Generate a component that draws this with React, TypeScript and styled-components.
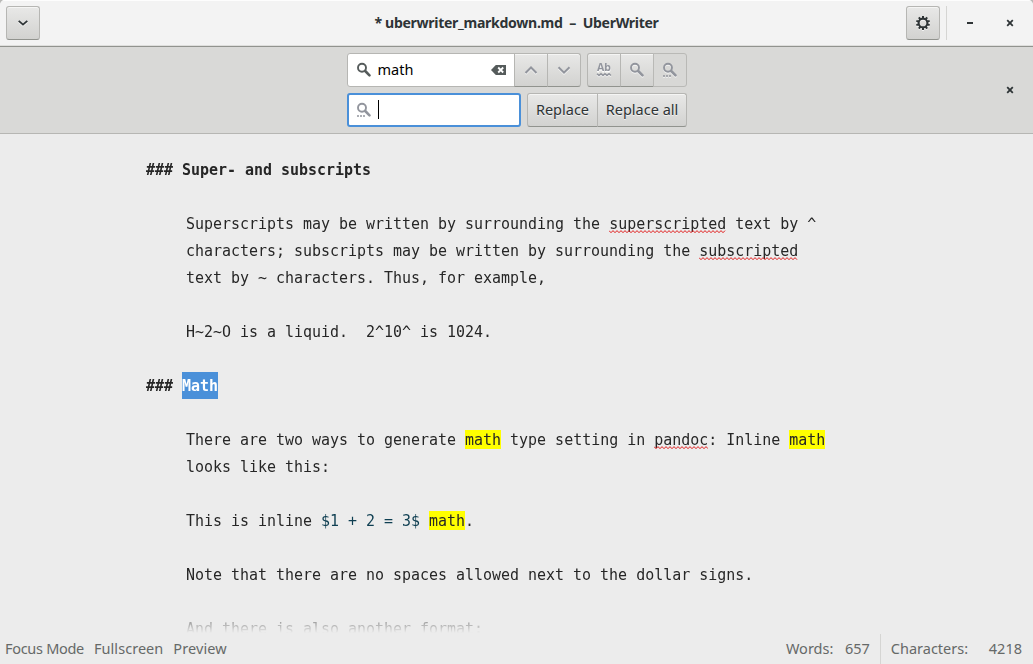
import React from 'react';
import styled, { createGlobalStyle, css } from 'styled-components';

const Global = createGlobalStyle`
  *, *::before, *::after { box-sizing: border-box; }
  body { margin: 0; background: #ececec; overflow: hidden; }
`;

const Window = styled.div`
  display: flex;
  flex-direction: column;
  width: 1033px;
  height: 664px;
  overflow: hidden;
  background: #ececec;
  color: #2e3436;
  font-family: 'Noto Sans', 'Open Sans', sans-serif;
  font-size: 14.5px;
  border-radius: 5px 5px 0 0;
`;

const Backdrop = styled.div`
  background: #b9b9b7;
`;

const HeaderBar = styled.header`
  display: grid;
  grid-template-columns: 1fr auto 1fr;
  height: 47px;
  flex: none;
  padding: 6px 6px 0;
  background: #f3f3f3;
  border-bottom: 1px solid #91938e;
  box-shadow: inset 0 1px #fdfdfd, inset 0 -1px #dededc;
`;

const Title = styled.h1`
  margin: 0;
  font-size: 14.1px;
  line-height: 34px;
  font-weight: 700;
  letter-spacing: -0.32px;
  white-space: pre;
`;

const WindowControls = styled.div`
  display: flex;
  justify-content: flex-end;
`;

const ControlGap = styled.span`
  width: 6px;
`;

const Divider = styled.div<{ $height: number }>`
  width: 1px;
  height: ${(p) => p.$height}px;
  background: #d5d5d3;
`;

const raised = css`
  background: linear-gradient(#e8e8e7, #d2d2d0);
  border: 1px solid #b6b6b3;
  border-bottom-color: #91938e;
  box-shadow: inset 0 1px #f5f5f4;
`;

const Button = styled.button<{ $pressed?: boolean; $width?: number }>`
  display: flex;
  align-items: center;
  justify-content: center;
  width: ${(p) => p.$width ?? 34}px;
  height: 34px;
  flex: none;
  padding: 0;
  border-radius: 3px;
  font: inherit;
  color: #2e3436;
  text-shadow: 0 1px rgba(255, 255, 255, 0.7);
  white-space: nowrap;
  ${raised}
  & svg { overflow: visible; filter: drop-shadow(0 1px 0 rgba(255, 255, 255, 0.7)); }
  ${(p) =>
    p.$pressed &&
    css`
      background: #d8d8d6;
      border-color: #b9b9b6;
      box-shadow: none;
    `}
`;

const ButtonLabel = styled.span`
  line-height: 20px;
  padding: 0 0 2px 1px;
`;

const FlatButton = styled.button`
  display: flex;
  align-items: center;
  justify-content: center;
  width: 34px;
  height: 34px;
  padding: 0;
  border: 0;
  background: none;
  color: #2e3436;
`;

const SearchBar = styled.section`
  display: grid;
  grid-template-columns: 1fr 340px 1fr;
  align-items: center;
  height: 87px;
  flex: none;
  padding: 0 6px;
  background: #d9d9d7;
  border-bottom: 1px solid #b6b6b3;
`;

const SearchFields = styled.div`
  grid-column: 2;
  display: flex;
  flex-direction: column;
  gap: 6px;
`;

const FieldRow = styled.div`
  display: flex;
  gap: 6px;
`;

const Linked = styled.div`
  display: flex;
  & > * + * { margin-left: -1px; }
  & > *:not(:first-child) { border-top-left-radius: 0; border-bottom-left-radius: 0; }
  & > *:not(:last-child) { border-top-right-radius: 0; border-bottom-right-radius: 0; }
`;

const Entry = styled.div<{ $width: number; $focused?: boolean }>`
  display: flex;
  align-items: center;
  width: ${(p) => p.$width}px;
  height: 34px;
  padding: 0 7px 0 ${(p) => (p.$focused ? 7 : 8)}px;
  border: ${(p) => (p.$focused ? '2px solid #4a90d9' : '1px solid #b6b6b3')};
  border-radius: 3px;
  background: #fff;
  color: #000;
`;

const EntryText = styled.span`
  flex: 1;
  margin-left: 6px;
  padding-bottom: 2px;
  line-height: 20px;
`;

const Caret = styled.span`
  width: 1px;
  height: 19px;
  margin: 0 0 1px 6px;
  background: #000;
`;

const CloseSlot = styled.div`
  display: flex;
  justify-content: flex-end;
`;

const Editor = styled.main`
  flex: 1;
  min-height: 0;
  padding: 22px 0 0 186px;
  overflow: hidden;
  color: #262626;
  font-family: 'DejaVu Sans Mono', 'Liberation Mono', monospace;
  font-size: 14.96px;
  line-height: 29px;
  mask-image: linear-gradient(#000 calc(100% - 30px), transparent calc(100% - 1px));
`;

const Line = styled.div<{ $heading?: boolean }>`
  height: 27px;
  white-space: pre;
  ${(p) => p.$heading && 'margin-left: -40px; font-weight: 700;'}
`;

const Hit = styled.mark`
  padding: 1px 0 0;
  background: #ff0;
  color: inherit;
`;

const Selected = styled.span`
  display: inline-block;
  height: 27px;
  background: #4a90d9;
  color: #fff;
`;

const Formula = styled.span`
  color: #0f3f52;
`;

const MisspeltWord = styled.span`
  position: relative;
  & svg { position: absolute; left: 0; bottom: -1px; }
`;

const StatusBar = styled.footer`
  display: flex;
  align-items: flex-start;
  justify-content: space-between;
  height: 30px;
  flex: none;
  padding: 0 11px 0 5px;
  color: #666968;
  line-height: 28px;
`;

const StatusGroup = styled.div`
  display: flex;
  gap: 10px;
`;

const StatusText = styled.span<{ $width?: number; $spacing?: number }>`
  width: ${(p) => (p.$width ? `${p.$width}px` : 'auto')};
  letter-spacing: ${(p) => p.$spacing ?? 0}px;
  white-space: nowrap;
`;

function Misspelt({ children }: { children: string }) {
  const width = children.length * 9;
  const points: string[] = [];
  for (let x = 0; x <= width; x += 2) points.push(`${x},${(x / 2) % 2 ? 2.7 : 0.6}`);
  return (
    <MisspeltWord>
      {children}
      <svg width={width} height="4" fill="none" stroke="#e01c1c" strokeWidth="1">
        <polyline points={points.join(' ')} />
      </svg>
    </MisspeltWord>
  );
}

function Magnifier({ color = '#555b5b', dots = false }: { color?: string; dots?: boolean }) {
  return (
    <svg width="16" height="16" viewBox="0 0 16 16" fill="none" stroke={color}>
      <circle cx="6" cy="5.8" r="4" strokeWidth="1.9" />
      <path d="M9.2 9 13.5 13.3" strokeWidth="2.6" strokeLinecap="round" />
      {dots && <path d="M1 14h2M4 14h2M7 14h2" strokeWidth="1.7" />}
    </svg>
  );
}

function Chevron({ up = false }: { up?: boolean }) {
  return (
    <svg width="16" height="16" viewBox="0 0 16 16" fill="none" stroke="#92959d" strokeWidth="2">
      <path d={up ? 'M2.5 11 8 5.5 13.5 11' : 'M2.5 5.2 8 10.7l5.5-5.5'} />
    </svg>
  );
}

function MenuArrow() {
  return (
    <svg width="16" height="16" viewBox="0 0 16 16" fill="none" stroke="#2e3436" strokeWidth="1.8">
      <path d="M3.7 5.8 8 9.6 12.3 5.8" />
    </svg>
  );
}

function Gear() {
  const teeth = Array.from({ length: 10 }, (_, i) => i * 36);
  return (
    <svg width="16" height="16" viewBox="0 0 16 16" fill="none" stroke="#2e3436">
      <circle cx="8" cy="8" r="4.4" strokeWidth="2.1" />
      {teeth.map((a) => (
        <path key={a} d="M8 1v2.6" strokeWidth="2" transform={`rotate(${a} 8 8)`} />
      ))}
    </svg>
  );
}

function Cross() {
  return (
    <svg width="16" height="16" viewBox="0 0 16 16" stroke="#2e3436" strokeWidth="1.8">
      <path d="m5.2 5.2 5.6 5.6M10.8 5.2l-5.6 5.6" />
    </svg>
  );
}

function Minus() {
  return (
    <svg width="16" height="16" viewBox="0 0 16 16">
      <path d="M5 7h6v2H5z" fill="#2e3436" />
    </svg>
  );
}

function ClearIcon() {
  return (
    <svg width="16" height="16" viewBox="0 0 16 16">
      <path d="M4.8 3H15v10H4.8L0 8z" fill="#555b5b" />
      <path d="m7.2 5.5 5 5M12.2 5.5l-5 5" stroke="#fff" strokeWidth="1.8" />
    </svg>
  );
}

function MatchCaseIcon() {
  return (
    <svg width="16" height="16" viewBox="0 0 16 16">
      <text x="8" y="9.3" textAnchor="middle" fontFamily="'Noto Sans', sans-serif" fontWeight="700" fontSize="10.5" fill="#92959d">
        Ab
      </text>
      <path d="M1 11.7 3 13.6 5 11.7 7 13.6 9 11.7 11 13.6 13 11.7 15 13.6" fill="none" stroke="#92959d" strokeWidth="1.4" />
    </svg>
  );
}

export default function App() {
  return (
    <Backdrop>
      <Global />
      <Window>
        <HeaderBar>
          <Button aria-label="Open menu">
            <MenuArrow />
          </Button>
          <Title>* uberwriter_markdown.md  –  UberWriter</Title>
          <WindowControls>
            <Button aria-label="Settings">
              <Gear />
            </Button>
            <ControlGap />
            <Divider $height={34} />
            <ControlGap />
            <FlatButton aria-label="Minimize">
              <Minus />
            </FlatButton>
            <ControlGap />
            <FlatButton aria-label="Close">
              <Cross />
            </FlatButton>
          </WindowControls>
        </HeaderBar>

        <SearchBar>
          <SearchFields>
            <FieldRow>
              <Linked>
                <Entry $width={168}>
                  <Magnifier />
                  <EntryText>math</EntryText>
                  <ClearIcon />
                </Entry>
                <Button aria-label="Previous match">
                  <Chevron up />
                </Button>
                <Button aria-label="Next match">
                  <Chevron />
                </Button>
              </Linked>
              <Linked>
                <Button aria-label="Match case">
                  <MatchCaseIcon />
                </Button>
                <Button aria-label="Regular expression">
                  <Magnifier color="#92959d" />
                </Button>
                <Button aria-label="Show replace" $pressed>
                  <Magnifier color="#92959d" dots />
                </Button>
              </Linked>
            </FieldRow>
            <FieldRow>
              <Entry $width={174} $focused>
                <Magnifier color="#92959d" dots />
                <Caret />
              </Entry>
              <Linked>
                <Button $width={71}>
                  <ButtonLabel>Replace</ButtonLabel>
                </Button>
                <Button $width={90}>
                  <ButtonLabel>Replace all</ButtonLabel>
                </Button>
              </Linked>
            </FieldRow>
          </SearchFields>
          <CloseSlot>
            <FlatButton aria-label="Close search">
              <Cross />
            </FlatButton>
          </CloseSlot>
        </SearchBar>

        <Editor>
          <Line $heading>### Super- and subscripts</Line>
          <Line />
          <Line>
            Superscripts may be written by surrounding the <Misspelt>superscripted</Misspelt> text by ^
          </Line>
          <Line>
            characters; subscripts may be written by surrounding the <Misspelt>subscripted</Misspelt>
          </Line>
          <Line>text by ~ characters. Thus, for example,</Line>
          <Line />
          <Line>H~2~O is a liquid.  2^10^ is 1024.</Line>
          <Line />
          <Line $heading>
            ### <Selected>Math</Selected>
          </Line>
          <Line />
          <Line>
            There are two ways to generate <Hit>math</Hit> type setting in <Misspelt>pandoc</Misspelt>: Inline <Hit>math</Hit>
          </Line>
          <Line>looks like this:</Line>
          <Line />
          <Line>
            This is inline <Formula>$1 + 2 = 3$</Formula> <Hit>math</Hit>.
          </Line>
          <Line />
          <Line>Note that there are no spaces allowed next to the dollar signs.</Line>
          <Line />
          <Line>And there is also another format:</Line>
        </Editor>

        <StatusBar>
          <StatusGroup>
            <StatusText $spacing={-0.3}>Focus Mode</StatusText>
            <StatusText $spacing={0.05}>Fullscreen</StatusText>
            <StatusText $spacing={0.1}>Preview</StatusText>
          </StatusGroup>
          <StatusGroup>
            <StatusText $width={49}>Words:</StatusText>
            <StatusText>657</StatusText>
            <Divider $height={30} />
            <StatusText $width={88}>Characters:</StatusText>
            <StatusText>4218</StatusText>
          </StatusGroup>
        </StatusBar>
      </Window>
    </Backdrop>
  );
}
